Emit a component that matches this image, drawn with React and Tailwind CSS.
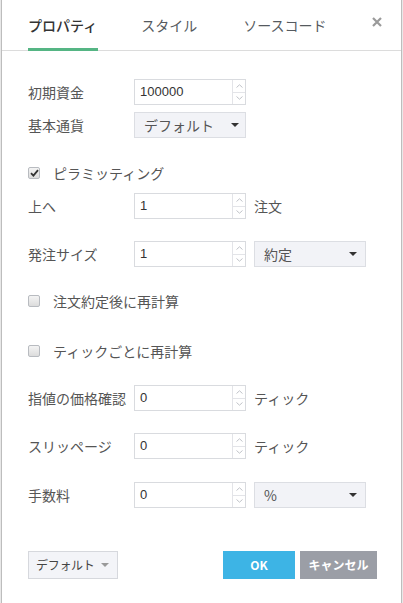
import React from "react";

const FONT = { fontFamily: '"Noto Sans CJK JP", "Noto Sans", sans-serif' };

function Chevron({ up }) {
  return (
    <svg width="7" height="4" viewBox="0 0 7 4" className="block">
      <path
        d={up ? "M0.5 3.5 L3.5 0.8 L6.5 3.5" : "M0.5 0.5 L3.5 3.2 L6.5 0.5"}
        fill="none"
        stroke="#b9bcc2"
        strokeWidth="0.9"
      />
    </svg>
  );
}

function NumInput({ value }) {
  return (
    <div className="flex h-[26px] w-[112px] border border-[#d9dbdf] bg-white">
      <div
        className="flex flex-1 items-center pl-[5px] text-[13px] text-[#333]"
        style={{ fontFamily: '"Liberation Sans", Arial, sans-serif' }}
      >
        {value}
      </div>
      <div className="flex w-[13px] flex-col border-l border-[#e3e4e8]">
        <div className="flex flex-1 items-center justify-center border-b border-[#e3e4e8]">
          <Chevron up />
        </div>
        <div className="flex flex-1 items-center justify-center">
          <Chevron />
        </div>
      </div>
    </div>
  );
}

function Caret({ color = "#333" }) {
  return (
    <svg width="8" height="4" viewBox="0 0 8 4" className="block shrink-0">
      <path d="M0 0 L8 0 L4 4 Z" fill={color} />
    </svg>
  );
}

function Select({ label, caretPad = "pr-[6px]" }) {
  return (
    <div
      className={`flex h-[26px] w-[112px] items-center justify-between border border-[#dcdee3] bg-[#f2f3f7] pl-[9px] ${caretPad} text-[14px] text-[#555]`}
    >
      <span className="whitespace-nowrap">{label}</span>
      <Caret />
    </div>
  );
}

function Checkbox({ checked }) {
  return (
    <div className="flex h-[12px] w-[12px] items-center justify-center rounded-[2px] border border-[#b8bbc0] bg-gradient-to-b from-[#f4f4f4] to-[#dcdcdc]">
      {checked && (
        <svg width="9" height="8" viewBox="0 0 9 8">
          <path d="M1 4.2 L3.4 6.6 L8 1.2" fill="none" stroke="#333" strokeWidth="1.8" />
        </svg>
      )}
    </div>
  );
}

function Row({ label, children, className = "" }) {
  return (
    <div className={`flex items-center ${className}`}>
      <div className="w-[106px] whitespace-nowrap text-[14px] text-[#555]">{label}</div>
      {children}
    </div>
  );
}

function CheckRow({ checked, label, className = "" }) {
  return (
    <div className={`flex h-[20px] items-center ${className}`}>
      <Checkbox checked={checked} />
      <span className="ml-[13px] text-[14px] text-[#555]">{label}</span>
    </div>
  );
}

export default function App() {
  return (
    <div className="h-[603px] w-[403px] overflow-hidden bg-[#e8e8e8]" style={FONT}>
      <div className="ml-[1px] h-full w-[401px] border-l border-r border-[#bdbdbd] bg-white">
        {/* header */}
        <div className="relative flex h-[51px] items-stretch border-b border-[#dcdcdc] pl-[26px]">
          <div className="relative flex items-center text-[14px] font-medium text-[#333]">
            プロパティ
            <div className="absolute bottom-[-1px] left-0 h-[3px] w-[70px] bg-[#55b584]" />
          </div>
          <div className="ml-[44px] flex items-center text-[14px] text-[#555a60]">スタイル</div>
          <div className="ml-[46px] flex items-center text-[14px] text-[#555a60]">ソースコード</div>
          <svg
            width="10"
            height="10"
            viewBox="0 0 10 10"
            className="absolute right-[19px] top-[17px]"
          >
            <path d="M1 1 L9 9 M9 1 L1 9" stroke="#9a9a9a" strokeWidth="2.2" />
          </svg>
        </div>

        {/* body */}
        <div className="flex flex-col pl-[26px]">
          <Row label="初期資金" className="mt-[28px]">
            <NumInput value="100000" />
          </Row>
          <Row label="基本通貨" className="mt-[7px]">
            <Select label="デフォルト" caretPad="pr-[6px]" />
          </Row>
          <CheckRow checked label="ピラミッティング" className="mt-[25px]" />
          <Row label="上へ" className="mt-[10px]">
            <NumInput value="1" />
            <span className="ml-[8px] text-[14px] text-[#555]">注文</span>
          </Row>
          <Row label="発注サイズ" className="mt-[22px]">
            <NumInput value="1" />
            <div className="ml-[8px]">
              <Select label="約定" caretPad="pr-[8px]" />
            </div>
          </Row>
          <CheckRow label="注文約定後に再計算" className="mt-[24px]" />
          <CheckRow label="ティックごとに再計算" className="mt-[30px]" />
          <Row label="指値の価格確認" className="mt-[24px]">
            <NumInput value="0" />
            <span className="ml-[8px] text-[14px] text-[#555]">ティック</span>
          </Row>
          <Row label="スリッページ" className="mt-[22px]">
            <NumInput value="0" />
            <span className="ml-[8px] text-[14px] text-[#555]">ティック</span>
          </Row>
          <Row label="手数料" className="mt-[23px]">
            <NumInput value="0" />
            <div className="ml-[8px]">
              <Select label="%" caretPad="pr-[8px]" />
            </div>
          </Row>

          {/* footer */}
          <div className="mt-[43px] flex items-center pr-[24px]">
            <div className="flex h-[28px] w-[90px] items-center justify-between border border-[#d6d8dd] bg-[#f3f4f8] pl-[7px] pr-[8px] text-[12px] tracking-[-0.3px] text-[#444]">
              <span className="whitespace-nowrap">デフォルト</span>
              <Caret color="#999" />
            </div>
            <div className="flex-1" />
            <div className="flex h-[28px] w-[72px] items-center justify-center bg-[#3db4e5] text-[12px] font-bold text-white">
              OK
            </div>
            <div className="ml-[5px] flex h-[28px] w-[77px] items-center justify-center whitespace-nowrap bg-[#9b9ea6] text-[12px] font-bold text-white">
              キャンセル
            </div>
          </div>
        </div>
      </div>
    </div>
  );
}
